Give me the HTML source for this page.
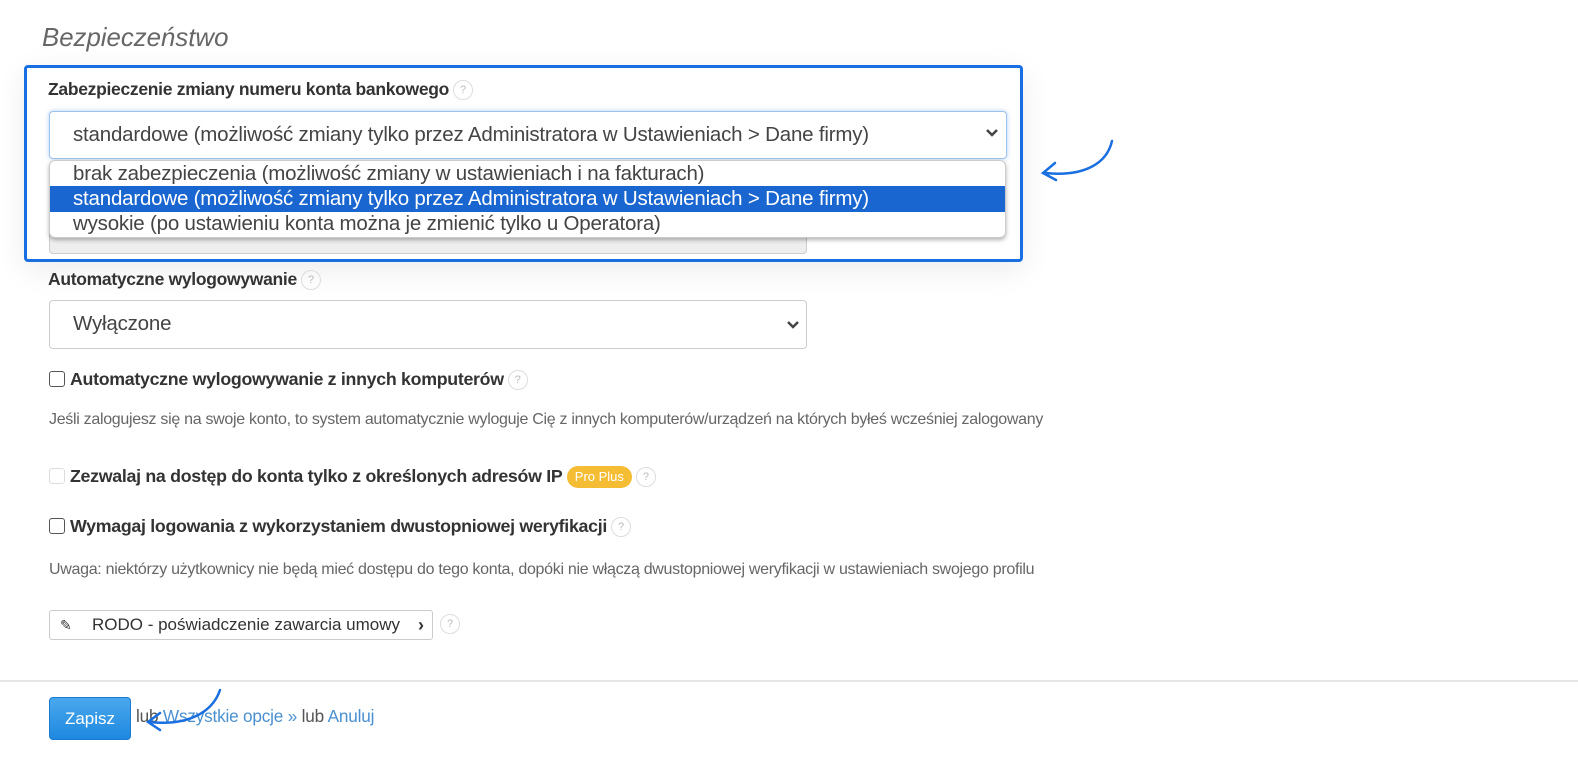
<!DOCTYPE html>
<html><head><meta charset="utf-8"><style>
*{box-sizing:border-box}
body{margin:0;width:1578px;height:764px;background:#fff;font-family:"Liberation Sans",Arial,sans-serif;color:#333;position:relative;overflow:hidden}
.a{position:absolute;white-space:nowrap}
.q{display:inline-block;width:20px;height:20px;border:1px solid #ddd;border-radius:50%;color:#bbb;font-size:11px;font-weight:normal;text-align:center;line-height:18px;vertical-align:middle;margin-left:4px;letter-spacing:0}
.lbl{font-size:17.8px;font-weight:bold;color:#333;letter-spacing:-0.3px}
.sel{border:1px solid #ccc;border-radius:4px;background:#fff;font-size:20.5px;color:#444;padding-left:23px;line-height:46px;letter-spacing:-0.2px}
.cb{display:inline-block;width:16px;height:16px;border:1px solid #555;border-radius:3px;vertical-align:-2px;margin-right:5px;background:#fff}
.small{font-size:16px;color:#666;letter-spacing:-0.3px}
</style></head><body>
<div class="a" style="left:42px;top:24px;font-size:25.8px;font-style:italic;color:#666">Bezpieczeństwo</div>

<div class="a" style="left:24px;top:65px;width:999px;height:197px;border:3px solid #1a6fe0;border-radius:4px;box-shadow:0 8px 30px rgba(0,0,0,.08)"></div>
<div class="a lbl" style="left:48px;top:79px;font-size:17.5px">Zabezpieczenie zmiany numeru konta bankowego<span class="q">?</span></div>
<div class="a sel" style="left:49px;top:111px;width:958px;height:48px;border-color:#9cc4ec;box-shadow:0 0 5px rgba(100,160,230,.5)">standardowe (możliwość zmiany tylko przez Administratora w Ustawieniach &gt; Dane firmy)</div>
<svg class="a" style="left:985px;top:128px" width="14" height="10" viewBox="0 0 14 10"><path d="M2 2l5 5 5-5" stroke="#444" stroke-width="2.5" fill="none"/></svg>
<div class="a" style="left:49px;top:226px;width:758px;height:28px;border:1px solid #ccc;border-radius:4px;background:#eee"></div>
<div class="a" style="left:49px;top:160px;width:957px;height:78px;background:#fff;border:1px solid #ccc;border-radius:6px;box-shadow:0 2px 4px rgba(0,0,0,.3);overflow:hidden;font-size:20.5px;color:#444;letter-spacing:-0.2px">
<div style="height:25px;line-height:25px;padding-left:23px">brak zabezpieczenia (możliwość zmiany w ustawieniach i na fakturach)</div>
<div style="height:26px;line-height:26px;padding-left:23px;background:#1a66d0;color:#fff">standardowe (możliwość zmiany tylko przez Administratora w Ustawieniach &gt; Dane firmy)</div>
<div style="height:26px;line-height:24px;padding-left:23px">wysokie (po ustawieniu konta można je zmienić tylko u Operatora)</div>
</div>
<svg class="a" style="left:1035px;top:135px" width="85" height="50" viewBox="0 0 85 50"><path d="M77 6C72 28 50 42 10 38" stroke="#1a6fe0" stroke-width="2.5" fill="none" stroke-linecap="round"/><path d="M20 28L8 38l13 7" stroke="#1a6fe0" stroke-width="2.5" fill="none" stroke-linecap="round"/></svg>

<div class="a lbl" style="left:48px;top:269px;font-size:17.5px">Automatyczne wylogowywanie<span class="q">?</span></div>
<div class="a sel" style="left:49px;top:300px;width:758px;height:49px">Wyłączone</div>
<svg class="a" style="left:786px;top:320px" width="14" height="10" viewBox="0 0 14 10"><path d="M2 2l5 5 5-5" stroke="#444" stroke-width="2.5" fill="none"/></svg>

<div class="a lbl" style="left:49px;top:369px"><span class="cb"></span>Automatyczne wylogowywanie z innych komputerów<span class="q">?</span></div>
<div class="a small" style="left:49px;top:411px">Jeśli zalogujesz się na swoje konto, to system automatycznie wyloguje Cię z innych komputerów/urządzeń na których byłeś wcześniej zalogowany</div>
<div class="a lbl" style="left:49px;top:466px"><span class="cb" style="border-color:#ddd"></span>Zezwalaj na dostęp do konta tylko z określonych adresów IP <span style="display:inline-block;background:#f5bd34;color:#fff;font-weight:normal;font-size:13px;border-radius:11px;padding:0 8px;line-height:22px;vertical-align:1px;letter-spacing:0">Pro Plus</span><span class="q">?</span></div>
<div class="a lbl" style="left:49px;top:516px"><span class="cb"></span>Wymagaj logowania z wykorzystaniem dwustopniowej weryfikacji<span class="q">?</span></div>
<div class="a small" style="left:49px;top:561px">Uwaga: niektórzy użytkownicy nie będą mieć dostępu do tego konta, dopóki nie włączą dwustopniowej weryfikacji w ustawieniach swojego profilu</div>

<div class="a" style="left:49px;top:610px;width:384px;height:30px;border:1px solid #ccc;border-radius:3px;font-size:17px;line-height:28px;color:#333">
<span style="position:absolute;left:10px;top:0;font-size:14px">✎</span><span style="position:absolute;left:42px">RODO - poświadczenie zawarcia umowy</span><span style="position:absolute;right:8px;font-weight:bold;font-size:18px">›</span></div>
<span class="a q" style="left:436px;top:614px">?</span>

<div class="a" style="left:0;top:680px;width:1578px;height:2px;background:#e6e6e6"></div>
<div class="a" style="left:49px;top:697px;width:82px;height:43px;border-radius:4px;background:linear-gradient(#4aa8ec,#1e88e0);border:1px solid #1a7bd0;color:#fff;font-size:17px;text-align:center;line-height:41px">Zapisz</div>
<div class="a" style="left:136px;top:706px;font-size:17.2px;color:#555;letter-spacing:-0.2px">lub <span style="color:#4a90d0">Wszystkie opcje »</span> lub <span style="color:#4a90d0">Anuluj</span></div>
<svg class="a" style="left:140px;top:688px" width="85" height="48" viewBox="0 0 85 48"><path d="M80 2C72 26 45 38 10 34" stroke="#1a6fe0" stroke-width="2.5" fill="none" stroke-linecap="round"/><path d="M20 25L8 34l12 8" stroke="#1a6fe0" stroke-width="2.5" fill="none" stroke-linecap="round"/></svg>
</body></html>
